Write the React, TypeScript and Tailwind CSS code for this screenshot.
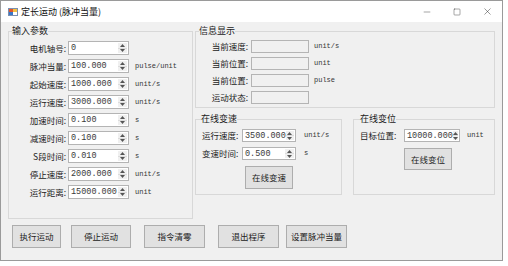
import { Minus, Square, X } from 'lucide-react'

const CJK = "font-['Noto_Sans_CJK_SC',sans-serif]"
const MONO = "font-['Liberation_Mono',monospace]"

const INPUT_ROWS = [
  { label: '电机轴号:', value: '0', unit: '' },
  { label: '脉冲当量:', value: '100.000', unit: 'pulse/unit' },
  { label: '起始速度:', value: '1000.000', unit: 'unit/s' },
  { label: '运行速度:', value: '3000.000', unit: 'unit/s' },
  { label: '加速时间:', value: '0.100', unit: 's' },
  { label: '减速时间:', value: '0.100', unit: 's' },
  { label: 'S段时间:', value: '0.010', unit: 's' },
  { label: '停止速度:', value: '2000.000', unit: 'unit/s' },
  { label: '运行距离:', value: '15000.000', unit: 'unit' },
]

const INFO_ROWS = [
  { label: '当前速度:', unit: 'unit/s' },
  { label: '当前位置:', unit: 'unit' },
  { label: '当前位置:', unit: 'pulse' },
  { label: '运动状态:', unit: '' },
]

const BUTTONS = [
  { text: '执行运动', w: 'w-[49px]' },
  { text: '停止运动', w: 'w-[60px]' },
  { text: '指令清零', w: 'w-[61px]' },
  { text: '退出程序', w: 'w-[61px]' },
  { text: '设置脉冲当量', w: 'w-[61px]' },
]

function Spin() {
  return (
    <div className="flex flex-col w-[9px] my-[1px] mr-[1px] bg-[#f0f0f0]">
      <div className="flex-1 flex items-center justify-center border-b border-[#dcdcdc]">
        <svg width="5" height="3" viewBox="0 0 5 3"><path d="M0 3L2.5 0L5 3Z" fill="#555" /></svg>
      </div>
      <div className="flex-1 flex items-center justify-center">
        <svg width="5" height="3" viewBox="0 0 5 3"><path d="M0 0L5 0L2.5 3Z" fill="#555" /></svg>
      </div>
    </div>
  )
}

function NumBox({ value, w, h = 'h-[14px]' }: { value: string; w: string; h?: string }) {
  return (
    <div className={`flex ${w} ${h} bg-white border border-[#b4b4b4]`}>
      <span className={`flex-1 pl-[2px] text-[8.5px] leading-[12px] text-[#3a3a3a] ${MONO}`}>{value}</span>
      <Spin />
    </div>
  )
}

function Btn({ text, w, h = 'h-[23px]' }: { text: string; w: string; h?: string }) {
  return (
    <button className={`${w} ${h} bg-[#e1e1e1] border border-[#adadad] text-[8.5px] text-[#222] ${CJK} flex items-center justify-center`}>
      {text}
    </button>
  )
}

function AppIcon() {
  return (
    <svg width="10" height="10" viewBox="0 0 10 10">
      <rect x="0.5" y="1.5" width="9" height="7" fill="#fff" stroke="#7a8fb0" />
      <rect x="1" y="2" width="4" height="3" fill="#e2562c" />
      <rect x="5" y="2" width="4" height="3" fill="#f4c143" />
      <rect x="1" y="5" width="4" height="3" fill="#3b78c8" />
    </svg>
  )
}

export default function App() {
  return (
    <div className="w-[508px] h-[266px] bg-white">
      <div className="w-[503px] h-[261px] flex flex-col border border-[#9a9a9a] bg-white">
        {/* Title bar */}
        <div className="h-[21px] flex items-center pl-[7px] shrink-0">
          <AppIcon />
          <span className={`ml-[3px] text-[9px] text-[#111] ${CJK}`}>定长运动 (脉冲当量)</span>
          <div className="ml-auto flex items-center text-[#222]">
            <div className="w-[30px] flex justify-center"><Minus size={10} strokeWidth={1} /></div>
            <div className="w-[30px] flex justify-center"><Square size={8} strokeWidth={1.2} /></div>
            <div className="w-[30px] flex justify-center"><X size={11} strokeWidth={1} /></div>
          </div>
        </div>

        {/* Client */}
        <div className={`flex-1 bg-[#f0f0f0] ${CJK} text-[8.5px] text-[#222]`}>
          <div className="flex pt-[4px] pl-[7px] gap-[2px]">
            {/* 输入参数 */}
            <fieldset className="w-[185px] h-[193px] border border-[#d8d8d8] px-[3px]">
              <legend className="leading-[10px] text-[9px]">输入参数</legend>
              <div className="flex flex-col gap-[4px] pt-[5px]">
                {INPUT_ROWS.map(r => (
                  <div key={r.label} className="flex items-center h-[14px]">
                    <span className="w-[54px] text-right leading-[14px]">{r.label}</span>
                    <div className="ml-[2px]"><NumBox value={r.value} w="w-[61px]" /></div>
                    <span className={`ml-[6px] text-[7px] text-[#333] ${MONO}`}>{r.unit}</span>
                  </div>
                ))}
              </div>
            </fieldset>

            <div className="flex flex-col">
              {/* 信息显示 */}
              <fieldset className="w-[300px] h-[82px] border border-[#d8d8d8] px-[3px]">
                <legend className="leading-[10px] text-[9px]">信息显示</legend>
                <div className="flex flex-col gap-[4px] pt-[4px]">
                  {INFO_ROWS.map((r, i) => (
                    <div key={i} className="flex items-center h-[13px]">
                      <span className="w-[49px] text-right leading-[13px]">{r.label}</span>
                      <div className="ml-[3px] w-[58px] h-[13px] border border-[#b4b4b4] bg-[#f0f0f0]" />
                      <span className={`ml-[5px] text-[7px] text-[#333] ${MONO}`}>{r.unit}</span>
                    </div>
                  ))}
                </div>
              </fieldset>

              <div className="flex mt-[6px] gap-[11px]">
                {/* 在线变速 */}
                <fieldset className="w-[147px] h-[81px] border border-[#d8d8d8] px-[3px]">
                  <legend className="ml-[2px] leading-[10px] text-[9px]">在线变速</legend>
                  <div className="flex flex-col gap-[5px] pt-[5px]">
                    <div className="flex items-center h-[13px]">
                      <span className="ml-[3px] w-[40px] leading-[13px]">运行速度:</span>
                      <NumBox value="3500.000" w="w-[54px]" h="h-[13px]" />
                      <span className={`ml-[8px] text-[7px] text-[#333] ${MONO}`}>unit/s</span>
                    </div>
                    <div className="flex items-center h-[13px]">
                      <span className="ml-[3px] w-[40px] leading-[13px]">变速时间:</span>
                      <NumBox value="0.500" w="w-[54px]" h="h-[13px]" />
                      <span className={`ml-[8px] text-[7px] text-[#333] ${MONO}`}>s</span>
                    </div>
                  </div>
                  <div className="pl-[46px] pt-[6px]">
                    <Btn text="在线变速" w="w-[48px]" />
                  </div>
                </fieldset>

                {/* 在线变位 */}
                <fieldset className="w-[142px] h-[81px] border border-[#d8d8d8] px-[3px]">
                  <legend className="ml-[3px] leading-[10px] text-[9px]">在线变位</legend>
                  <div className="flex items-center h-[13px] mt-[5px]">
                    <span className="ml-[3px] w-[44px] leading-[13px]">目标位置:</span>
                    <NumBox value="10000.000" w="w-[56px]" h="h-[13px]" />
                    <span className={`ml-[7px] text-[7px] text-[#333] ${MONO}`}>unit</span>
                  </div>
                  <div className="pl-[47px] pt-[6px]">
                    <Btn text="在线变位" w="w-[48px]" h="h-[22px]" />
                  </div>
                </fieldset>
              </div>
            </div>
          </div>

          {/* Bottom buttons */}
          <div className="flex pl-[11px] pt-[6px] gap-[10px]">
            {BUTTONS.map((b, i) => (
              <div key={b.text} className={i === 4 ? '-ml-[3px]' : i >= 2 ? 'ml-[3px]' : ''}>
                <Btn text={b.text} w={b.w} />
              </div>
            ))}
          </div>
        </div>
      </div>
    </div>
  )
}
